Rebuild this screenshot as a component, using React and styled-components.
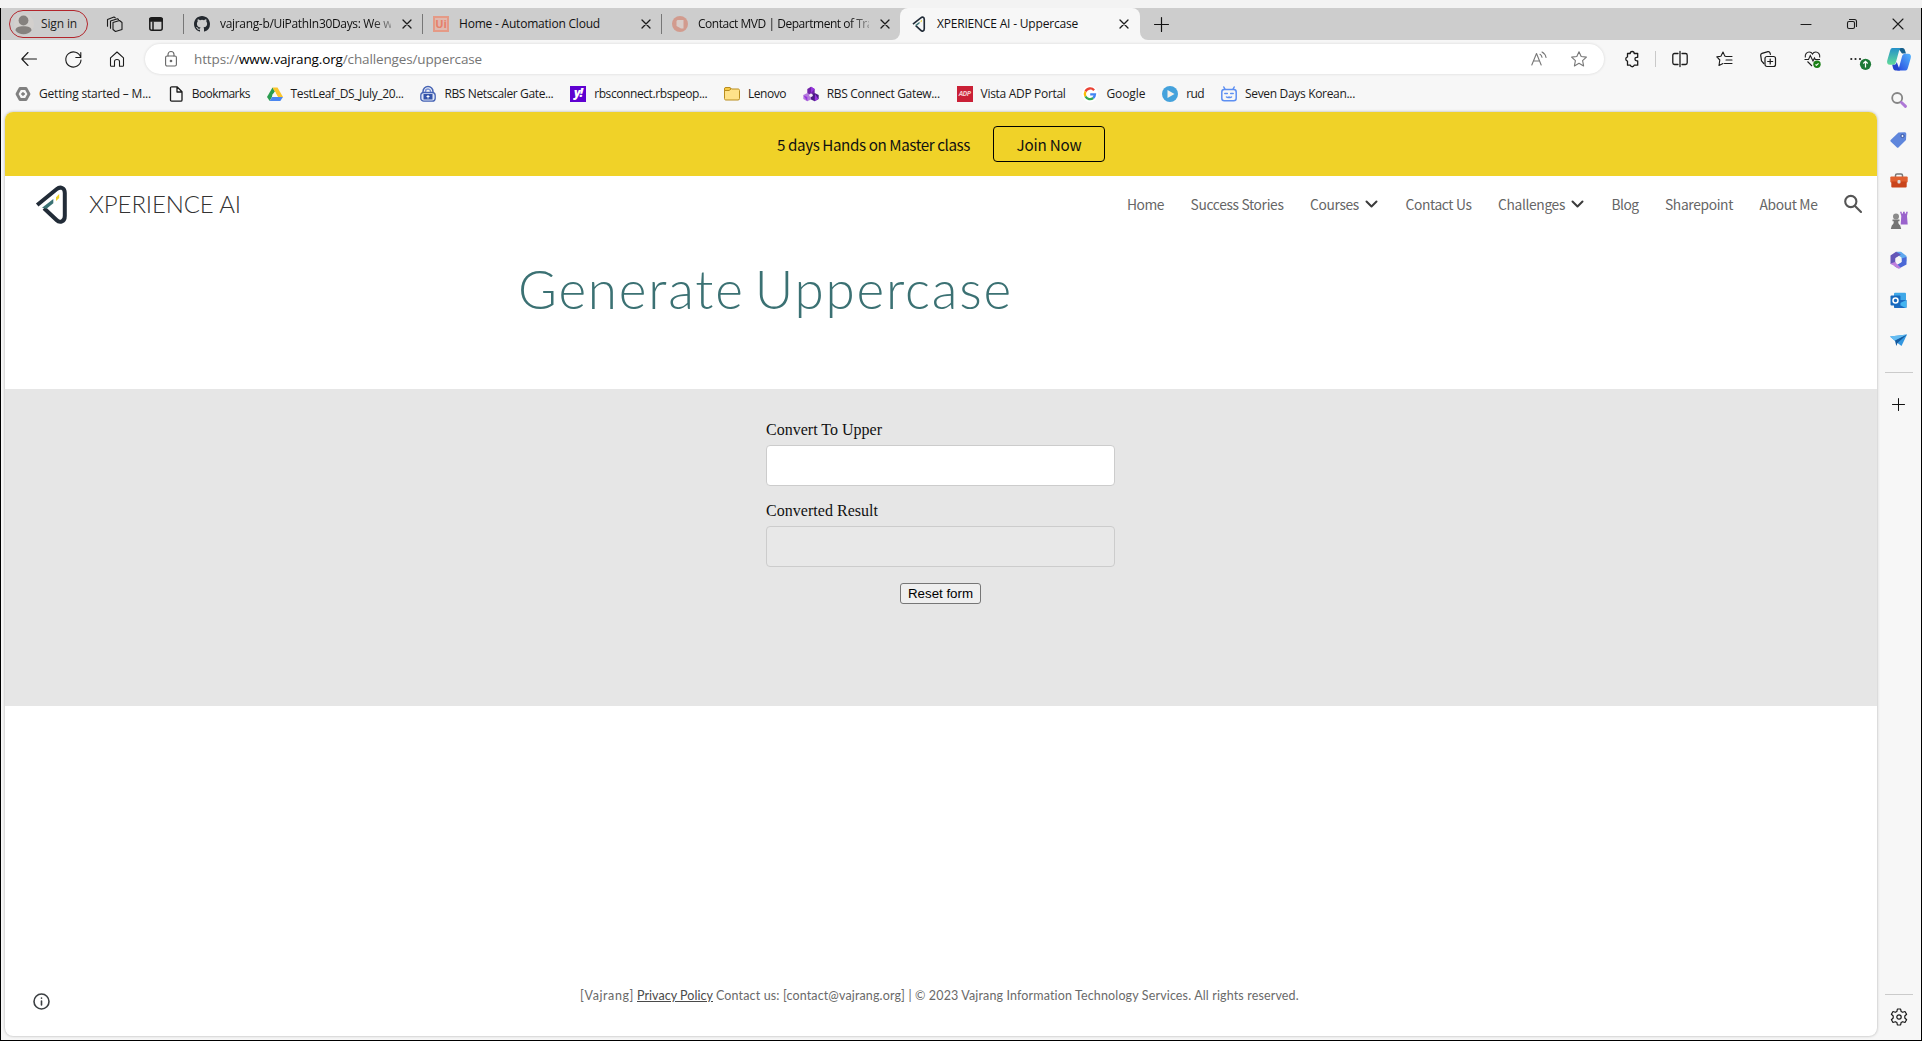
import React, { useLayoutEffect, useRef, useState } from "react";
import styled, { createGlobalStyle, css } from "styled-components";

const ui = '"Open Sans", "Noto Sans", sans-serif';
const humanist = '"Noto Sans CJK SC", "Open Sans", sans-serif';
const display = 'Lato, "Open Sans", sans-serif';

const Global = createGlobalStyle`
  * { box-sizing: border-box; }
  body { margin: 0; background: #f3f3f3; overflow: hidden; }
  svg { display: block; flex: none; overflow: visible; }
  button, input { margin: 0; }
`;

/* Text whose tracking is adjusted so that it fills a known width. */
const Line = styled.span`
  display: block;
  flex: none;
  white-space: pre;
  width: ${(p) => p.$w}px;
`;

function Fit({ w, children, className }) {
  const ref = useRef(null);
  const [track, setTrack] = useState(0);
  useLayoutEffect(() => {
    const el = ref.current;
    const natural = el.getBoundingClientRect().width;
    setTrack((w - natural) / el.textContent.length);
  }, [w]);
  return (
    <Line $w={w} className={className}>
      <span ref={ref} style={{ letterSpacing: track }}>{children}</span>
    </Line>
  );
}

/* ---------- window ---------- */
const Screen = styled.div`
  width: 1922px;
  height: 1041px;
  padding-top: 8px;
  background: #f3f3f3;
  font-family: ${ui};
`;
const Window = styled.div`
  height: 1033px;
  border: 1px solid #000;
  border-top: 0;
  background: #f7f7f7;
  display: flex;
  flex-direction: column;
`;
const TabStrip = styled.div`
  height: 32px;
  flex: none;
  display: flex;
`;
const StripLeft = styled.div`
  width: 899px;
  display: flex;
  align-items: center;
  background: #cdcdcd;
  border-bottom-right-radius: 8px;
`;
const StripRight = styled.div`
  flex: 1;
  display: flex;
  align-items: center;
  background: #cdcdcd;
  border-bottom-left-radius: 8px;
  padding-left: 14px;
`;
const SignIn = styled.div`
  width: 79px;
  height: 28px;
  margin-left: 8px;
  padding-left: 4px;
  display: flex;
  align-items: center;
  gap: 7px;
  border: 1px solid #b3262c;
  border-radius: 14px;
  color: #222;
  font-size: 12px;
  line-height: 16px;
`;
const StripTools = styled.div`
  display: flex;
  align-items: center;
  gap: 26px;
  padding: 0 20px 0 18px;
`;
const StripRule = styled.div`
  width: 1px;
  height: 20px;
  background: #777;
`;
const Tab = styled.div`
  width: 238px;
  height: 32px;
  flex: none;
  display: flex;
  align-items: center;
  gap: 10px;
  padding: 0 9px 0 10px;
  font-size: 12px;
  line-height: 16px;
  color: #111;
  ${(p) =>
    p.$active &&
    css`
      width: 240px;
      padding: 0 10px 0 11px;
      background: #f7f7f7;
      border-radius: 8px 8px 0 0;
    `}
`;
const ActiveWell = styled.div`
  background: linear-gradient(#cdcdcd 50%, #f7f7f7 50%);
`;
const TabLabel = styled.div`
  flex: 1;
  min-width: 0;
  ${(p) => p.$fade && "mask: linear-gradient(to right, #000 152px, transparent 180px) no-clip;"}
`;
const CloseSlot = styled.div`
  flex: none;
`;
const WindowButtons = styled.div`
  margin-left: auto;
  display: flex;
`;
const WindowButton = styled.div`
  width: 46px;
  display: flex;
  justify-content: center;
`;
const Body = styled.div`
  flex: 1;
  display: flex;
`;
const Main = styled.div`
  width: 1876px;
  display: flex;
  flex-direction: column;
`;

/* ---------- toolbar ---------- */
const Toolbar = styled.div`
  height: 38px;
  display: flex;
  align-items: center;
  padding-left: 6px;
`;
const ToolButton = styled.div`
  width: 44px;
  flex: none;
  display: flex;
  justify-content: center;
  align-items: center;
`;
const Address = styled.div`
  width: 1459px;
  height: 30px;
  flex: none;
  margin: 0 6px 0 6px;
  padding: 0 17px 0 20px;
  display: flex;
  align-items: center;
  background: #fff;
  border-radius: 15px;
  box-shadow: 0 0 3px rgba(0, 0, 0, 0.14);
  font-size: 13.5px;
  line-height: 18px;
  color: #757575;
  b { font-weight: 400; color: #000; }
`;
const Url = styled.div`
  margin: 0 auto 0 17px;
`;
const AddressTools = styled.div`
  display: flex;
  align-items: center;
  gap: 24px;
`;
const ToolRule = styled.div`
  width: 1px;
  height: 16px;
  flex: none;
  margin: 0 2px 0 1px;
  background: #c9c9c9;
`;

/* ---------- bookmarks ---------- */
const Bookmarks = styled.div`
  height: 34px;
  padding: 0 0 2px 14px;
  display: flex;
  align-items: center;
  gap: 16.8px;
`;
const Bookmark = styled.div`
  display: flex;
  align-items: center;
  gap: 8px;
  font-size: 12px;
  line-height: 16px;
  color: #1b1b1b;
`;

/* ---------- web page ---------- */
const Page = styled.div`
  width: 1872px;
  height: 924px;
  margin-left: 4px;
  display: flex;
  flex-direction: column;
  background: #fff;
  border-radius: 8px;
  overflow: hidden;
  box-shadow: 0 0 3px rgba(0, 0, 0, 0.3);
`;
const Banner = styled.div`
  height: 64px;
  flex: none;
  display: flex;
  align-items: center;
  gap: 23px;
  padding-left: 772px;
  background: #f0d228;
  color: #111;
  font-family: ${humanist};
  font-size: 15.2px;
  line-height: 24px;
`;
const JoinButton = styled.div`
  width: 112px;
  height: 36px;
  display: flex;
  align-items: center;
  justify-content: center;
  border: 1px solid #000;
  border-radius: 4px;
`;
const Header = styled.header`
  height: 56px;
  flex: none;
  display: flex;
  align-items: center;
  padding: 0 15px 0 31px;
`;
const Brand = styled.div`
  margin: -1px auto 0 21px;
  font-family: ${display};
  font-weight: 300;
  font-size: 24px;
  line-height: 30px;
  color: #333;
`;
const Nav = styled.nav`
  display: flex;
  align-items: center;
  gap: 26.5px;
  font-family: ${humanist};
  font-size: 13.8px;
  line-height: 22px;
  color: #666;
`;
const NavItem = styled.div`
  display: flex;
  align-items: center;
  gap: 6px;
  padding-right: ${(p) => (p.$menu ? 1 : 0)}px;
`;
const Title = styled.h1`
  height: 157px;
  flex: none;
  margin: 0;
  padding: 25px 0 0 513px;
  font-family: ${display};
  font-weight: 300;
  font-size: 53px;
  line-height: 64px;
  word-spacing: -6px;
  color: #3b7173;
`;
const Band = styled.section`
  height: 317px;
  flex: none;
  background: #e6e6e6;
  padding: 32px 1px 0 0;
  display: flex;
  justify-content: center;
`;
const Form = styled.div`
  width: 349px;
  display: flex;
  flex-direction: column;
  align-items: center;
  gap: 16px;
`;
const Field = styled.label`
  width: 100%;
  display: flex;
  flex-direction: column;
  gap: 6px;
  font-family: "Liberation Serif", serif;
  font-size: 16px;
  line-height: 18px;
  color: #111;
`;
const TextInput = styled.input`
  width: 349px;
  height: 41px;
  border: 1px solid #ccc;
  border-radius: 4px;
  background: ${(p) => (p.readOnly ? "#e8e8e8" : "#fff")};
`;
const Reset = styled.button`
  width: 81px;
  height: 21px;
  padding: 0;
  display: flex;
  justify-content: center;
  align-items: center;
  border: 1px solid #767676;
  border-radius: 3px;
  background: #efefef;
  font: 13.33px "Liberation Sans", sans-serif;
  color: #000;
`;
const Footer = styled.footer`
  margin-top: auto;
  height: 70px;
  padding: 0 0 0 28px;
  display: flex;
  align-items: center;
`;
const FooterText = styled.div`
  margin: -11px 0 0 530px;
  display: flex;
  font-family: ${display};
  font-size: 12.5px;
  line-height: 18px;
  color: #6a6a6a;
`;
const FooterLink = styled.a`
  margin: 0 3px;
  color: #4a4a4a;
  text-decoration: underline;
`;

/* ---------- sidebar ---------- */
const Sidebar = styled.aside`
  width: 43px;
  display: flex;
  flex-direction: column;
  align-items: center;
  padding-bottom: 2px;
`;
const SideSlot = styled.div`
  height: ${(p) => p.$h || 40}px;
  display: flex;
  align-items: center;
  justify-content: center;
`;
const SideRule = styled.div`
  width: 28px;
  height: 1px;
  background: #cbcbcb;
  ${(p) => p.$low && "margin-top: auto;"}
`;

/* ---------- drawings ---------- */
const Icon = ({ s = 16, w = s, h = s, vb, c = "#1b1b1b", sw = 1.1, children }) => (
  <svg width={w} height={h} viewBox={vb || `0 0 ${w} ${h}`} fill="none" stroke={c} strokeWidth={sw} strokeLinecap="round" strokeLinejoin="round">
    {children}
  </svg>
);
const Close = () => <Icon s={12} sw={1.3}><path d="M2 2l8 8M10 2l-8 8" /></Icon>;
const Avatar = () => (
  <svg width="20" height="20" viewBox="0 0 20 20">
    <circle cx="10" cy="10" r="10" fill="#d3d0cd" />
    <circle cx="9.5" cy="6.500" r="4.900" fill="#85817e" />
    <path d="M1.500 16.500c0-3 3-4.200 8-4.200s8 1.200 8 4.200c-2 2.500-4.500 3.800-8 3.800s-6-1.300-8-3.800z" fill="#85817e" />
  </svg>
);
const Workspaces = () => (
  <Icon w={17} h={16}>
    <path d="M7 6.500l6.500-2 2.500 2v7l-6.500 2-2.500-2z" /><path d="M4.500 12.300V5l7-2.300 1 .8M1.500 10.300V3.500L8 1l1.200.8" />
  </Icon>
);
const TabsMenu = () => (
  <Icon s={14} sw={1.5}>
    <rect x=".8" y=".8" width="12.4" height="12.4" rx="2" /><path d="M1 1.500h12v2.500H1z" fill="#1b1b1b" /><path d="M4 5v8" />
  </Icon>
);
const Github = () => (
  <svg width="16" height="16" viewBox="0 0 16 16" fill="#24292f">
    <path d="M8 0C3.580 0 0 3.580 0 8c0 3.540 2.290 6.530 5.470 7.590.4.070.55-.17.55-.38 0-.19-.01-.82-.01-1.490-2.010.37-2.530-.49-2.690-.94-.09-.23-.48-.94-.82-1.130-.28-.15-.68-.52-.01-.53.63-.01 1.080.58 1.230.82.72 1.210 1.870.87 2.330.66.07-.52.28-.87.51-1.070-1.780-.2-3.640-.89-3.640-3.950 0-.87.31-1.590.82-2.150-.08-.2-.36-1.020.08-2.120 0 0 .67-.21 2.200.82a7.400 7.400 0 0 1 4 0c1.530-1.040 2.200-.82 2.200-.82.44 1.100.16 1.920.08 2.120.51.56.82 1.270.82 2.150 0 3.070-1.870 3.750-3.650 3.950.29.25.54.73.54 1.480 0 1.070-.01 1.930-.01 2.200 0 .21.15.46.55.38A8 8 0 0 0 16 8c0-4.420-3.580-8-8-8z" />
  </svg>
);
const UiTile = styled.div`
  width: 16px;
  height: 16px;
  flex: none;
  border: 2px solid #e59a86;
  background: #dfb9af;
  color: #e6806a;
  font: 700 11px/11px ${ui};
  text-align: center;
`;
const Mvd = () => (
  <svg width="16" height="16" viewBox="0 0 16 16"><circle cx="8" cy="8" r="8" fill="#d29b8e" /><path d="M5.500 4h6v8.500H9L4.500 10V5z" fill="#d8ccc8" /></svg>
);
const Xperience = ({ w, h }) => (
  <svg width={w} height={h} viewBox="0 0 32 39" fill="none">
    <path d="M1.200 20L20.500 4.300C24.500 1 28.800 3 28.800 8v23c0 5.800-5 7.400-8.300 4L8 23.300" stroke="#222c38" strokeWidth="4" />
    <path d="M6 22.700L17.300 14v4.200L10.500 23.800z" fill="#3b7173" /><path d="M20 12.300l3.200-3.300v4L20 16z" fill="#f0d228" />
  </svg>
);
const Back = () => <Icon><path d="M15.500 8H1M7 1.500L.8 8 7 14.500" /></Icon>;
const Refresh = () => <Icon s={17}><path d="M15.700 6.300A7.600 7.600 0 1 0 16 9M15.800 1.500v5h-5" /></Icon>;
const HomeIcon = () => <Icon><path d="M1.500 6.800L8 1l6.500 5.800v7.700c0 .5-.3.8-.8.8h-3.200v-4.800c0-1.200-1-2-2.500-2s-2.500.8-2.500 2v4.800H2.300c-.5 0-.8-.3-.8-.8z" /></Icon>;
const Padlock = () => (
  <Icon w={12} h={16} c="#666"><rect x=".6" y="5" width="10.800" height="10" rx="1.500" /><path d="M3 5V3.500a3 3 0 0 1 6 0V5" /><circle cx="6" cy="10" r=".8" fill="#666" /></Icon>
);
const ReadAloud = () => <Icon c="#777"><path d="M.8 14L5.500 2.500 10.200 14M2.500 10h6M9 3.300c1.200.7 1.800 1.700 2 3M11 1c2.200 1.200 3.600 3 4 5.500" /></Icon>;
const starPath = "M8 .8l2.200 4.700 5.200.6-3.800 3.600 1 5.200L8 12.300l-4.600 2.600 1-5.200L.6 6.100l5.200-.6z";
const Star = () => <Icon c="#777"><path d={starPath} /></Icon>;
const Puzzle = () => (
  <Icon sw={1.3}><path d="M3.500 2.500h2.700a2 2 0 0 1 4 0h3.500v3.800h-1a1.800 1.800 0 0 0 0 3.600h1v4.300h-3.500a2 2 0 0 1-3.900 0H3.500v-4a2.200 2.200 0 0 1 0-4.300z" /></Icon>
);
const Split = () => <Icon sw={1.3}><path d="M6 2.500H2.500c-1 0-1.700.7-1.700 1.700v7.600c0 1 .7 1.700 1.700 1.700H6M10 2.500h3.500c1 0 1.700.7 1.700 1.700v7.600c0 1-.7 1.700-1.700 1.700H10M8 .5v15" /></Icon>;
const Favorites = () => <Icon><path d="M10 5.500L8.700 4.900 7 1 4.900 5.300.8 5.900l3 3.100-.8 5.500 4-2M10 5.500h6M10 9h6M8.500 12.500H16" /></Icon>;
const Collections = () => (
  <Icon sw={1.2}><rect x="5" y="5.500" width="10.500" height="10" rx="2" /><path d="M10.200 8v5M7.700 10.500h5M3.800 12.500L1.500 9.800.7 4.300C.6 3.300 1 2.700 2 2.400l6-1.700c1-.2 1.700.3 2 1.200l.4 1.500" /></Icon>
);
const Heart = () => (
  <svg width="17" height="17" viewBox="0 0 17 17" fill="none" stroke="#222" strokeWidth="1.100">
    <path d="M1.300 6.500C.8 3 3 1 5.200 1 7 1 8 2 8.500 3 9 2 10 1 11.800 1 14 1 16.200 3 15.700 6.500M.5 8.500h4l1.800-4 2.700 5.500 1.500-3 .8 1.500H16M3.500 10.500l4.500 4.500" />
    <circle cx="13" cy="13.300" r="3.700" fill="#1b8016" stroke="none" /><path d="M11.500 13.500l1 .8 2-2" stroke="#fff" />
  </svg>
);
const More = () => (
  <svg width="16" height="16" viewBox="0 0 16 16" fill="#222">
    <circle cx="3.300" cy="8" r="1.100" /><circle cx="7.500" cy="8" r="1.100" /><circle cx="12" cy="8" r="1.100" />
    <circle cx="17.500" cy="13.300" r="5.600" fill="#1c7a36" /><path d="M17.500 16.500v-6M15.300 12.500l2.200-2.200 2.200 2.200" fill="none" stroke="#fff" strokeWidth="1.200" />
  </svg>
);
const Copilot = () => (
  <svg width="24" height="23" viewBox="0 0 24 23">
    <defs>
      <linearGradient id="cpa" x1="0" y1="0" x2="0" y2="1"><stop stopColor="#2490c9" /><stop offset="1" stopColor="#62dc9a" /></linearGradient>
      <linearGradient id="cpb" x1="0" y1="1" x2="1" y2="0"><stop stopColor="#2746dd" /><stop offset="1" stopColor="#55b7ff" /></linearGradient>
    </defs>
    <path d="M11 0h4.500c1.500 0 2 1 2.500 2.500l1 3h-4z" fill="#17608c" />
    <path d="M5.500 0H14c-1 .5-1.700 1.500-2 3L9 14c-.5 2-1.500 2.800-3 2.800H3c-2.500 0-3.500-2-2.700-4.500L3 3c.6-1.800 1-3 2.500-3z" fill="url(#cpa)" />
    <path d="M18.500 22.500H10c1-.5 1.700-1.500 2-3l3-11c.5-2 1.500-2.800 3-2.800h3c2.500 0 3.500 2 2.700 4.500L21 19.500c-.6 1.800-1 3-2.500 3z" fill="url(#cpb)" />
    <path d="M13 22.500H8.500c-1.500 0-2-1-2.500-2.500l-.8-3.200c3 .2 4-.5 4.500-2.800z" fill="#2544cc" />
  </svg>
);
const Hexagon = () => <Icon c="#808080" sw={2.8}><path d="M5 2.500h6L14 8l-3 5.500H5L2 8z" /><circle cx="8" cy="8" r="1.300" fill="#808080" stroke="#808080" strokeWidth="1" /></Icon>;
const Doc = () => <Icon sw={1.3}><path d="M2.500 2c0-.8.400-1.200 1.200-1.200H9l5 5V14c0 .8-.4 1.200-1.200 1.200H3.700c-.8 0-1.200-.4-1.200-1.200zM9 .8V6h5" /></Icon>;
const Drive = () => (
  <svg width="16" height="16" viewBox="0 0 16 16"><path d="M5.500 1.500L0 11l2.700 4L8 5.500z" fill="#2a9d50" /><path d="M5.500 1.500h5L16 11h-5z" fill="#fbc52c" /><path d="M2.700 15h10.600L16 11H5z" fill="#4a86f0" /><path d="M5.500 8.500L8 5.500l2.500 5.500H5z" fill="#f7f7f7" /></svg>
);
const BlueLock = () => (
  <svg width="16" height="16" viewBox="0 0 16 16"><path d="M3 7V5.500a5 5 0 0 1 10 0V7" fill="none" stroke="#4563b4" strokeWidth="1.500" /><path d="M5.500 7V5.500a2.500 2.500 0 0 1 5 0V7" fill="none" stroke="#7a92d6" strokeWidth="1.500" /><rect x=".8" y="6.500" width="14.400" height="8.700" rx="3" fill="#dfe6f7" stroke="#4563b4" strokeWidth="1.300" /><rect x="3.500" y="8" width="9" height="5.500" fill="#3554a9" /><path d="M8 9v3.500M6.500 10.500h3" stroke="#fff" /></svg>
);
const YahooTile = styled.div`
  width: 16px;
  height: 16px;
  flex: none;
  background: #5f01d1;
  color: #fff;
  font: italic 800 12px/13px ${ui};
  letter-spacing: -1px;
  text-align: center;
`;
const Folder = () => <svg width="16" height="16" viewBox="0 0 16 16" fill="#ffe289" stroke="#b98d1e"><path d="M.5 3c0-1 .5-1.500 1.500-1.500h4L7.500 3H14c1 0 1.500.5 1.500 1.500v8c0 1-.5 1.500-1.500 1.500H2c-1 0-1.500-.5-1.500-1.500z" /><path d="M.5 4.500H5L7 3 6 1.500H2C1 1.500.5 2 .5 3z" fill="#f6c944" /></svg>;
const Natwest = () => (
  <svg width="16" height="16" viewBox="0 0 16 16"><path d="M8 .8l3.700 2.200v4.500L8 9.500 4.300 7.500V3z" fill="#7022a8" /><path d="M4.300 7L8 9v4.500l-3.800 1.700L.3 13V9z" fill="#b47bdc" /><path d="M11.700 7l4 2v4l-4 2.200L8 13.500V9z" fill="#4b1c84" /><path d="M8 .8L11.700 3 8 7zM.6 9.500L4.300 11v4.200zM12 8l3.300 5-3.600 2.200z" fill="#9734e0" /><circle cx="8" cy="9.300" r="1.700" fill="#f1e6f8" /></svg>
);
const AdpTile = styled.div`
  width: 16px;
  height: 16px;
  flex: none;
  background: #ca2036;
  color: #f3c8cd;
  font: italic 700 7px/16px ${ui};
  letter-spacing: -0.5px;
  text-align: center;
`;
const Google = () => (
  <svg width="16" height="16" viewBox="0 0 16 16"><circle cx="8" cy="8" r="8" fill="#fff" /><g fill="none" strokeWidth="2.300"><path d="M12.100 4.300A5.100 5.100 0 0 0 3.500 5.500" stroke="#ea4335" /><path d="M3.500 5.500a5.100 5.100 0 0 0 0 5" stroke="#fbbc05" /><path d="M3.500 10.500a5.100 5.100 0 0 0 7.700 1.500" stroke="#34a853" /><path d="M11.200 12A5 5 0 0 0 13 8.300H8.200" stroke="#4285f4" /></g></svg>
);
const Play = () => <svg width="16" height="16" viewBox="0 0 16 16"><circle cx="8" cy="8" r="8" fill="#45a2dc" /><path d="M5.500 4l7 4-7 4z" fill="#f4f0ea" /></svg>;
const Tv = () => <Icon c="#5d8ff2" sw={1.5}><rect x=".8" y="3.500" width="14.400" height="11.200" rx="2.500" /><path d="M4 3.300L2.800 1M12 3.300L13.200 1M3.800 7.500h2.500M9.700 7.500h2.500M5.500 11c1 .8 2 .8 2.500 0 .5.800 1.500.8 2.500 0" /></Icon>;

const Chevron = () => <Icon w={13} h={8} c="#3b3b3b" sw={2}><path d="M1.500 1.500l5 5 5-5" /></Icon>;
const Search = () => <Icon s={18} c="#555" sw={2.1}><circle cx="6.800" cy="6.500" r="5.600" /><path d="M11 11l6 6" /></Icon>;
const Info = () => <Icon s={17} c="#3c4043" sw={1.6}><circle cx="8.500" cy="8.500" r="7.500" /><path d="M8.500 8v4M8.500 5v.3" /></Icon>;

const SideSearch = () => <svg width="16" height="16" viewBox="0 0 16 16" fill="none"><circle cx="6.200" cy="6" r="5" stroke="#858585" strokeWidth="1.800" /><path d="M10.500 10.500l4 3.800" stroke="#ae78d6" strokeWidth="3" strokeLinecap="round" /></svg>;
const Tag = () => <svg width="17" height="16" viewBox="0 0 17 16"><path d="M8.500.5l6-.3c1 0 1.800.7 1.800 1.700L16 8l-7.300 7.200c-.7.700-1.400.7-2 0L.9 9.700c-.7-.7-.7-1.400 0-2z" fill="#5f86dc" /><circle cx="12.500" cy="4" r="1.600" fill="#e8eefc" stroke="#34509c" /></svg>;
const Toolbox = () => <svg width="18" height="15" viewBox="0 0 18 15"><path d="M5.500 4V2.500c0-1 .5-1.500 1.500-1.500h4c1 0 1.500.5 1.500 1.500V4" fill="none" stroke="#777" strokeWidth="1.500" /><rect x=".3" y="3.500" width="17.400" height="6" rx="1" fill="#e05f2f" /><rect x="1.300" y="8.500" width="15.400" height="6" rx="1" fill="#c9441b" /><rect x="7.500" y="7" width="3" height="3.500" rx="1" fill="#ddd" /></svg>;
const Chess = () => <svg width="18" height="19" viewBox="0 0 18 19"><path d="M10 .8h1.700v1.700h1.300V.8h1.800v1.700h1.300V.8h1.700L17 5l.7 8.500h-7L11.300 5z" fill="#9a63cc" /><circle cx="6" cy="5.500" r="3" fill="#8b8b8b" /><path d="M2.500 8.500h7v1.800H8.200c0 2 .5 3 2 4.200l1 3.500H.8l1-3.500c1.500-1.200 2-2.200 2-4.200H2.500z" fill="#757575" /></svg>;
const M365 = () => <svg width="17" height="18" viewBox="0 0 17 18"><path d="M6 .8L11 .8 16.500 5v5.500L11.500 8V6.500L8.500 4.500z" fill="#5fa8ee" /><path d="M6 .8L.5 4.500v8.500L5.500 14V7L11 3.500z" fill="#6457b8" /><path d="M16.500 6v7.500L9 17.500 4.500 15.500l7-4.500V7.500z" fill="#4b68d6" /><path d="M.5 12.500L8 17.500l3-.5-6-6z" fill="#c080de" /><path d="M8.500 5.700L11.500 7.500v3.500l-3 1.700L5.500 11V7.500z" fill="#f7f7f7" /></svg>;
const Outlook = () => <svg width="17" height="17" viewBox="0 0 17 17"><rect x="4" y=".8" width="12" height="10" rx="1" fill="#3fa8e8" /><path d="M4 8h12.500v7c0 .6-.4 1-1 1H5c-.6 0-1-.4-1-1z" fill="#1c6bc0" /><path d="M16.500 8v7c0 .6-.4 1-1 1L8 12z" fill="#44b4f0" /><rect x=".5" y="3.500" width="10" height="10" rx="1" fill="#1769bd" /><circle cx="5.500" cy="8.500" r="2.500" fill="none" stroke="#fff" strokeWidth="1.500" /></svg>;
const Plane = () => <svg width="17" height="13" viewBox="0 0 17 13"><path d="M0 2.500L17 .5 11.500 12 7.500 9z" fill="#3497e0" /><path d="M0 2.500L17 .5 5 7z" fill="#66bdf2" /><path d="M5 6.500L17 .5 7.500 9 6.300 12z" fill="#135a9f" /></svg>;
const Plus = ({ s = 14 }) => <Icon s={14} w={s} h={s} vb="0 0 14 14" c="#111"><path d="M7 .5v13M.5 7h13" /></Icon>;
const Gear = () => <Icon s={18} sw={1.2}><circle cx="9" cy="9" r="2.200" /><path d="M7.400 1h3.200l.5 2.400 1.600.9 2.300-.8 1.600 2.800L14.800 8v2l1.800 1.700-1.600 2.800-2.300-.8-1.600.9-.5 2.400H7.400l-.5-2.400-1.600-.9-2.300.8-1.600-2.800L3.200 10V8L1.400 6.300 3 3.500l2.300.8 1.600-.9z" /></Icon>;

const bookmarks = [
  [<Hexagon />, "Getting started – M...", 112],
  [<Doc />, "Bookmarks", 58],
  [<Drive />, "TestLeaf_DS_July_20...", 113],
  [<BlueLock />, "RBS Netscaler Gate...", 109],
  [<YahooTile>y!</YahooTile>, "rbsconnect.rbspeop...", 113],
  [<Folder />, "Lenovo", 38],
  [<Natwest />, "RBS Connect Gatew...", 113],
  [<AdpTile>ADP</AdpTile>, "Vista ADP Portal", 85],
  [<Google />, "Google", 39],
  [<Play />, "rud", 18],
  [<Tv />, "Seven Days Korean...", 110],
];

const navItems = [
  ["Home", 37], ["Success Stories", 93], ["Courses", 49, true], ["Contact Us", 66],
  ["Challenges", 67, true], ["Blog", 27], ["Sharepoint", 68], ["About Me", 58],
];

export default function App() {
  return (
    <Screen>
      <Global />
      <Window>
        <TabStrip>
          <StripLeft>
            <SignIn><Avatar /><Fit w={36}>Sign in</Fit></SignIn>
            <StripTools><Workspaces /><TabsMenu /></StripTools>
            <StripRule />
            <Tab><Github /><TabLabel $fade><Fit w={175}>vajrang-b/UiPathIn30Days: We wi</Fit></TabLabel><CloseSlot><Close /></CloseSlot></Tab>
            <StripRule />
            <Tab><UiTile>Ui</UiTile><TabLabel><Fit w={141}>Home - Automation Cloud</Fit></TabLabel><CloseSlot><Close /></CloseSlot></Tab>
            <StripRule />
            <Tab><Mvd /><TabLabel $fade><Fit w={175}>Contact MVD | Department of Tra</Fit></TabLabel><CloseSlot><Close /></CloseSlot></Tab>
          </StripLeft>
          <ActiveWell>
            <Tab $active><Xperience w={16} h={16} /><TabLabel><Fit w={141}>XPERIENCE AI - Uppercase</Fit></TabLabel><CloseSlot><Close /></CloseSlot></Tab>
          </ActiveWell>
          <StripRight>
            <Plus s={15} />
            <WindowButtons>
              <WindowButton><Icon s={10}><path d="M0 5.500h10" /></Icon></WindowButton>
              <WindowButton><Icon s={10}><rect x=".5" y="2.500" width="7" height="7" rx="1.500" /><path d="M2.500.5H7.500c1.300 0 2 .7 2 2v5" /></Icon></WindowButton>
              <WindowButton><Icon s={10}><path d="M0 0l10 10M10 0L0 10" /></Icon></WindowButton>
            </WindowButtons>
          </StripRight>
        </TabStrip>
        <Body>
          <Main>
            <Toolbar>
              <ToolButton><Back /></ToolButton>
              <ToolButton><Refresh /></ToolButton>
              <ToolButton><HomeIcon /></ToolButton>
              <Address>
                <Padlock />
                <Url><Fit w={288}>https://<b>www.vajrang.org</b>/challenges/uppercase</Fit></Url>
                <AddressTools><ReadAloud /><Star /></AddressTools>
              </Address>
              <ToolButton><Puzzle /></ToolButton>
              <ToolRule />
              <ToolButton><Split /></ToolButton>
              <ToolButton><Favorites /></ToolButton>
              <ToolButton><Collections /></ToolButton>
              <ToolButton><Heart /></ToolButton>
              <ToolButton><More /></ToolButton>
            </Toolbar>
            <Bookmarks>
              {bookmarks.map(([icon, label, w]) => (
                <Bookmark key={label}>{icon}<Fit w={w}>{label}</Fit></Bookmark>
              ))}
            </Bookmarks>
            <Page>
              <Banner>
                <Fit w={193}>5 days Hands on Master class</Fit>
                <JoinButton><Fit w={65}>Join Now</Fit></JoinButton>
              </Banner>
              <Header>
                <Xperience w={32} h={39} />
                <Brand><Fit w={152}>XPERIENCE AI</Fit></Brand>
                <Nav>
                  {navItems.map(([label, w, menu]) => (
                    <NavItem key={label} $menu={menu}><Fit w={w}>{label}</Fit>{menu && <Chevron />}</NavItem>
                  ))}
                  <Search />
                </Nav>
              </Header>
              <Title><Fit w={495}>Generate Uppercase</Fit></Title>
              <Band>
                <Form>
                  <Field><Fit w={116}>Convert To Upper</Fit><TextInput /></Field>
                  <Field><Fit w={112}>Converted Result</Fit><TextInput readOnly /></Field>
                  <Reset><Fit w={65}>Reset form</Fit></Reset>
                </Form>
              </Band>
              <Footer>
                <Info />
                <FooterText>
                  <Fit w={54}>[Vajrang]</Fit>
                  <FooterLink><Fit w={76}>Privacy Policy</Fit></FooterLink>
                  <Fit w={583}>Contact us: [contact@vajrang.org] | © 2023 Vajrang Information Technology Services. All rights reserved.</Fit>
                </FooterText>
              </Footer>
            </Page>
          </Main>
          <Sidebar>
            <SideSlot $h={39}><Copilot /></SideSlot>
            <SideSlot $h={41}><SideSearch /></SideSlot>
            <SideSlot><Tag /></SideSlot>
            <SideSlot><Toolbox /></SideSlot>
            <SideSlot><Chess /></SideSlot>
            <SideSlot><M365 /></SideSlot>
            <SideSlot><Outlook /></SideSlot>
            <SideSlot><Plane /></SideSlot>
            <SideSlot $h={12} />
            <SideRule />
            <SideSlot $h={63}><Plus s={13} /></SideSlot>
            <SideRule $low />
            <SideSlot $h={43}><Gear /></SideSlot>
          </Sidebar>
        </Body>
      </Window>
    </Screen>
  );
}
